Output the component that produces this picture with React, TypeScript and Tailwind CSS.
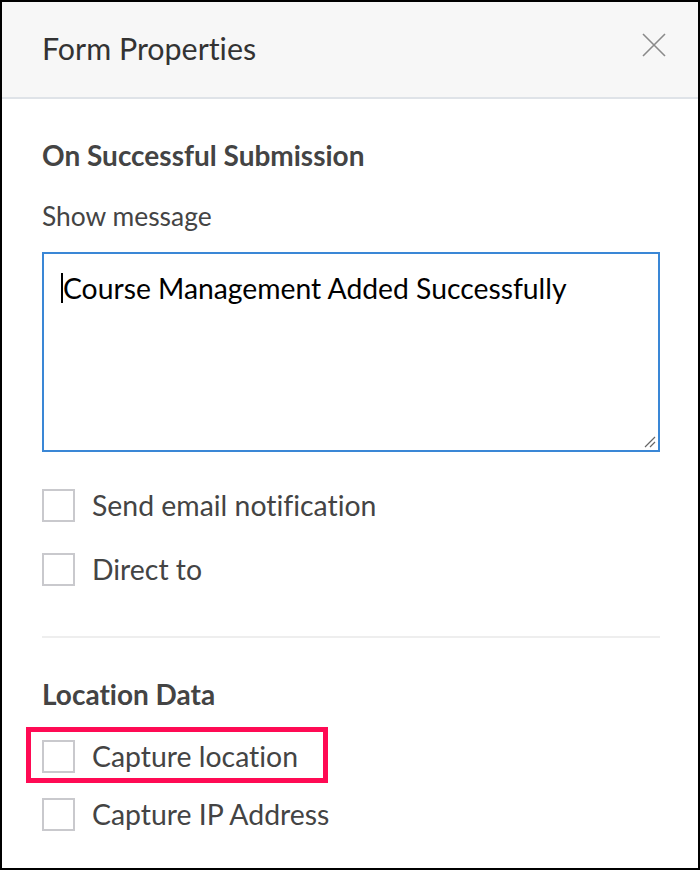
import React from "react"

const font = { fontFamily: "Lato, 'Open Sans', sans-serif" }

function Checkbox({ label }: { label: string }) {
  return (
    <div className="flex items-center h-[32px]">
      <div className="w-[33px] h-[33px] border-2 border-[#c9c9cd] bg-white shrink-0" />
      <span className="ml-[17px] text-[28.4px] leading-[32px] text-[#444]">{label}</span>
    </div>
  )
}

export default function App() {
  return (
    <div
      className="w-[700px] h-[870px] border-2 border-black bg-white flex flex-col [font-variant-ligatures:none]"
      style={font}
    >
      <div className="h-[97px] bg-[#f7f7f7] border-b-2 border-[#dfe3e8] flex items-center justify-between pl-[40px] pr-[32px] shrink-0">
        <h1 className="text-[30.4px] leading-[36px] text-[#333] mb-[4px]">Form Properties</h1>
        <svg width="24" height="24" viewBox="0 0 24 24" className="mb-[10px]">
          <path d="M1 1 L23 23 M23 1 L1 23" stroke="#8a8a8a" strokeWidth="1.6" fill="none" />
        </svg>
      </div>

      <div className="flex flex-col pl-[40px] pr-[38px]">
        <h2 className="mt-[39px] text-[28px] leading-[34px] font-bold text-[#444]">On Successful Submission</h2>
        <div className="mt-[28px] text-[26.4px] leading-[32px] text-[#444]">Show message</div>

        <div className="relative mt-[20px] h-[200px] border-2 border-[#3a87d6] pl-[17px] pt-[16px]">
          <div className="flex items-center">
            <span className="w-[2px] h-[30px] bg-black" />
            <span className="text-[28.3px] leading-[36px] text-black">Course Management Added Successfully</span>
          </div>
          <svg width="12" height="12" viewBox="0 0 12 12" className="absolute right-[2px] bottom-[2px]">
            <path d="M1 11 L11 1 M6 11 L11 6" stroke="#666" strokeWidth="1.2" fill="none" />
          </svg>
        </div>

        <div className="mt-[37px]">
          <Checkbox label="Send email notification" />
        </div>
        <div className="mt-[32px]">
          <Checkbox label="Direct to" />
        </div>

        <div className="mt-[51px] h-[2px] bg-[#eeeeee]" />

        <h2 className="mt-[39px] text-[28px] leading-[34px] font-bold text-[#444]">Location Data</h2>

        <div className="relative mt-[29px]">
          <Checkbox label="Capture location" />
          <div className="absolute left-[-16px] top-[-13px] w-[302px] h-[56px] border-[5px] border-[#ff0a54]" />
        </div>
        <div className="mt-[26px]">
          <Checkbox label="Capture IP Address" />
        </div>
      </div>
    </div>
  )
}
